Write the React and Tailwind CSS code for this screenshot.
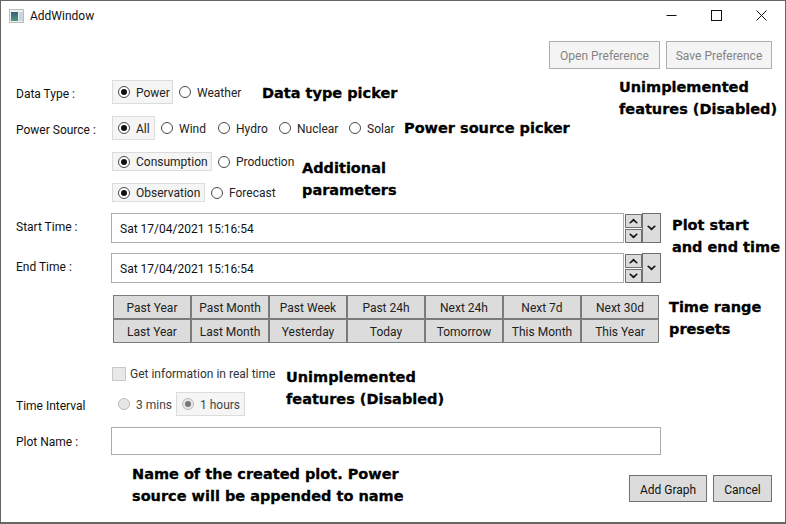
import React from "react";

const font = "font-['Roboto','Open_Sans',sans-serif]";

const Radio = ({ label, checked, boxed, disabled, className = "" }) => (
  <div
    className={`flex items-center h-full pl-[5px] pr-[1px] border ${
      boxed ? "border-[#dcdcdc] bg-[#f5f5f5]" : "border-transparent"
    } ${className}`}
  >
    <span
      className={`w-[12px] h-[12px] rounded-full border flex items-center justify-center shrink-0 ${
        disabled ? "border-[#bcbcbc] bg-[#e6e6e6]" : "border-[#4a4a4a] bg-white"
      }`}
    >
      {checked && (
        <span className={`w-[6px] h-[6px] rounded-full ${disabled ? "bg-[#777]" : "bg-[#111]"}`} />
      )}
    </span>
    <span className={`ml-[6px] pt-[1px] whitespace-nowrap ${disabled ? "text-[#444]" : "text-[#222]"}`}>{label}</span>
  </div>
);

const Label = ({ children, className = "" }) => (
  <div className={`w-[95px] shrink-0 text-[#111] ${className}`}>{children}</div>
);

// the small heavy chevron used on the date picker buttons
const Chevron = ({ up }) => (
  <svg width="9" height="6" viewBox="0 0 9 6">
    <path d={up ? "M0 5L4.5 0.5L9 5L7.5 5.5L4.5 3L1.5 5.5Z" : "M0 1L4.5 5.5L9 1L7.5 0.5L4.5 3L1.5 0.5Z"} fill="#111" />
  </svg>
);

const Spin = ({ up }) => (
  <div className="w-[17px] h-[14px] bg-[#dcdcdc] border border-[#707070] flex items-center justify-center">
    <Chevron up={up} />
  </div>
);

const DateRow = ({ label, value, className = "" }) => (
  <div className={`flex items-center h-[30px] ${className}`}>
    <Label className="-mt-[2px]">{label}</Label>
    <div className="flex w-[550px] h-[30px]">
      <div className="flex-1 border border-[#ababab] flex items-center pl-[8px] pt-[2px] text-[#111]">{value}</div>
      <div className="flex flex-col justify-center gap-[1px] ml-[1px]">
        <Spin up />
        <Spin />
      </div>
      <div className="w-[19px] bg-[#dcdcdc] border border-[#707070] flex items-center justify-center">
        <Chevron />
      </div>
    </div>
  </div>
);

const presets = [
  "Past Year",
  "Past Month",
  "Past Week",
  "Past 24h",
  "Next 24h",
  "Next 7d",
  "Next 30d",
  "Last Year",
  "Last Month",
  "Yesterday",
  "Today",
  "Tomorrow",
  "This Month",
  "This Year",
];

const Note = ({ className, children }) => (
  <div
    className={`absolute font-['DejaVu_Sans',sans-serif] font-bold text-[14.5px] leading-[22px] text-black whitespace-nowrap [-webkit-text-stroke:0.3px_black] ${className}`}
  >
    {children}
  </div>
);

export default function App() {
  return (
    <div className={`relative w-[786px] h-[524px] bg-white border border-[#666] border-b-[2px] overflow-hidden text-[12px] leading-[16px] ${font}`}>
      {/* title bar */}
      <div className="flex items-center h-[30px] pl-[8px]">
        <div className="w-[15px] h-[14px] border border-[#bdbdbd] bg-[#eee] flex items-center pl-[1px] gap-[1px]">
          <span className="w-[7px] h-[9px] bg-gradient-to-b from-[#35617c] to-[#4d9a7c]" />
          <span className="w-[4px] h-[9px] bg-[#c9d6de]" />
        </div>
        <span className="ml-[6px] text-[#111]">AddWindow</span>
        <div className="ml-auto flex items-center gap-[34px] pr-[18px] -mt-[2px] text-black">
          <svg width="11" height="11" viewBox="0 0 11 11">
            <path d="M0.5 5.5h10" stroke="#111" fill="none" />
          </svg>
          <svg width="11" height="11" viewBox="0 0 11 11">
            <rect x="0.5" y="0.5" width="10" height="10" stroke="#111" fill="none" />
          </svg>
          <svg width="11" height="11" viewBox="0 0 11 11">
            <path d="M0.5 0.5l10 10M10.5 0.5l-10 10" stroke="#111" fill="none" />
          </svg>
        </div>
      </div>

      <div className="pl-[15px]">
        {/* preference buttons */}
        <div className="flex justify-end gap-[6px] mt-[10px] pr-[13px]">
          <div className="w-[111px] h-[28px] border border-[#adadad] bg-[#f4f4f4] pt-[1px] text-[#838383] flex items-center justify-center">
            Open Preference
          </div>
          <div className="w-[106px] h-[28px] border border-[#adadad] bg-[#f4f4f4] pt-[1px] text-[#838383] flex items-center justify-center">
            Save Preference
          </div>
        </div>

        <div className="flex items-center h-[24px] mt-[11px]">
          <Label className="mt-[3px]">Data Type :</Label>
          <div className="flex h-full ml-[1px]">
            <Radio label="Power" checked boxed className="w-[61px]" />
            <Radio label="Weather" />
          </div>
        </div>

        <div className="flex items-center h-[24px] mt-[12px]">
          <Label className="mt-[4px]">Power Source :</Label>
          <div className="flex h-full ml-[1px]">
            <Radio label="All" checked boxed className="w-[43px]" />
            <Radio label="Wind" className="w-[57px]" />
            <Radio label="Hydro" className="w-[61px]" />
            <Radio label="Nuclear" className="w-[70px]" />
            <Radio label="Solar" />
          </div>
        </div>

        <div className="flex h-[19px] mt-[12px] pl-[96px]">
          <Radio label="Consumption" checked boxed className="w-[100px]" />
          <Radio label="Production" />
        </div>

        <div className="flex h-[19px] mt-[12px] pl-[96px]">
          <Radio label="Observation" checked boxed className="w-[93px]" />
          <Radio label="Forecast" />
        </div>

        <DateRow label="Start Time :" value="Sat 17/04/2021 15:16:54" className="mt-[11px]" />
        <DateRow label="End Time :" value="Sat 17/04/2021 15:16:54" className="mt-[10px]" />

        {/* range presets */}
        <div className="grid grid-cols-[repeat(7,78px)] grid-rows-[24px_24px] w-[546px] mt-[12px] ml-[97px]">
          {presets.map((p) => (
            <div key={p} className="bg-[#dcdcdc] border border-[#7b7b7b] flex items-center justify-center pt-[1px] text-[#222]">
              {p}
            </div>
          ))}
        </div>

        <div className="flex items-center h-[15px] mt-[23px] ml-[96px]">
          <span className="w-[14px] h-[14px] border border-[#c8c8c8] bg-[#e8e8e8]" />
          <span className="ml-[4px] text-[#333]">Get information in real time</span>
        </div>

        <div className="flex items-center h-[24px] mt-[11px]">
          <Label className="mt-[4px]">Time Interval</Label>
          <div className="flex h-full ml-[1px]">
            <Radio label="3 mins" disabled className="w-[64px]" />
            <Radio label="1 hours" checked disabled boxed className="w-[69px]" />
          </div>
        </div>

        <div className="flex items-center h-[28px] mt-[11px]">
          <Label className="mt-[2px]">Plot Name :</Label>
          <div className="w-[550px] h-full border border-[#ababab]" />
        </div>

        <div className="flex justify-end gap-[6px] mt-[20px] pr-[13px]">
          <div className="w-[78px] h-[27px] bg-[#dcdcdc] border border-[#707070] pt-[2px] flex items-center justify-center text-[#111]">
            Add Graph
          </div>
          <div className="w-[59px] h-[27px] bg-[#dcdcdc] border border-[#707070] pt-[2px] flex items-center justify-center text-[#111]">
            Cancel
          </div>
        </div>
      </div>

      {/* annotations drawn over the dialog */}
      <Note className="left-[261px] top-[81px]">Data type picker</Note>
      <Note className="left-[403px] top-[116px]">Power source picker</Note>
      <Note className="left-[618px] top-[75px]">
        Unimplemented
        <br />
        features (Disabled)
      </Note>
      <Note className="left-[301px] top-[156px]">
        Additional
        <br />
        parameters
      </Note>
      <Note className="left-[671px] top-[213px]">
        Plot start
        <br />
        and end time
      </Note>
      <Note className="left-[668px] top-[295px]">
        Time range
        <br />
        presets
      </Note>
      <Note className="left-[285px] top-[365px]">
        Unimplemented
        <br />
        features (Disabled)
      </Note>
      <Note className="left-[131px] top-[462px]">
        Name of the created plot. Power
        <br />
        source will be appended to name
      </Note>
    </div>
  );
}
